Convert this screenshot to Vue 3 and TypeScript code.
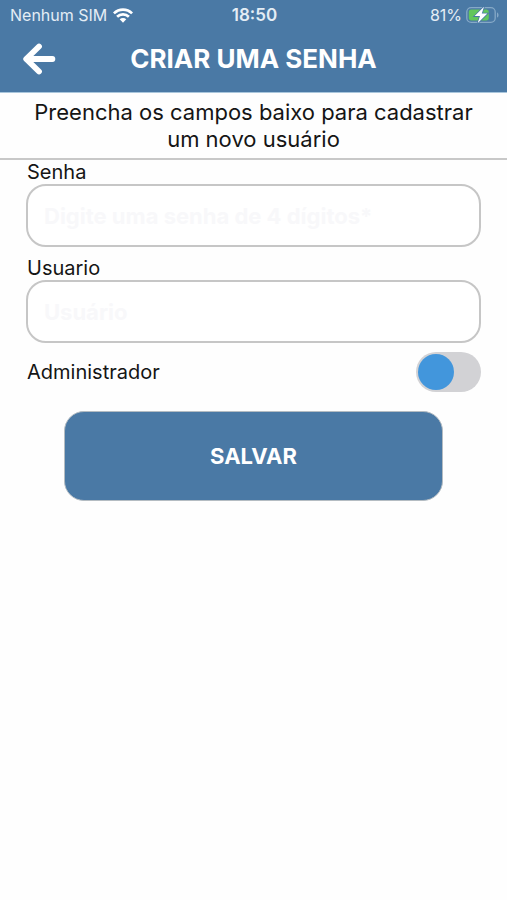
<script setup lang="ts">
import { ref } from 'vue'

const password = ref('')
const user = ref('')
const isAdmin = ref(false)
</script>

<template>
  <div class="screen">
    <header class="top">
      <div class="status">
        <div class="carrier">
          <span>Nenhum SIM</span>
          <svg class="wifi" viewBox="0 0 20 15" aria-hidden="true">
            <g fill="none" stroke="#fff" stroke-width="2.7">
              <path d="M0.9 5.4C6 .3 14 .3 19.1 5.4" />
              <path d="M4.1 8.8C7.4 5.6 12.6 5.6 15.9 8.8" />
            </g>
            <path d="M6.7 11.3C8.6 9.5 11.4 9.5 13.3 11.3L10 14.7Z" fill="#fff" />
          </svg>
        </div>
        <time class="clock">18:50</time>
        <div class="power">
          <span>81%</span>
          <svg class="battery" viewBox="0 0 33 18" aria-hidden="true">
            <rect x="0.8" y="1.6" width="28.4" height="14.8" rx="4.4" fill="none" stroke="#86a9c7" stroke-width="1.3" />
            <path d="M31 6.4C33 7 33 11 31 11.6Z" fill="#86a9c7" />
            <rect x="2.8" y="3.6" width="20" height="10.8" rx="2.6" fill="#62c65c" />
            <path d="M18 0.8L8.6 10.1H14L11.6 17.2L21.4 7.6H15.8Z" fill="#fff" stroke="#4a79a5" stroke-width="1.6" paint-order="stroke" />
          </svg>
        </div>
      </div>
      <div class="bar">
        <button class="back" type="button" aria-label="Voltar">
          <svg viewBox="0 0 34 32" aria-hidden="true">
            <path d="M17 3.5L4.2 16L17 28.5" fill="none" stroke="#fff" stroke-width="5.8" stroke-linecap="round" stroke-linejoin="round" />
            <path d="M5 16H30.4" fill="none" stroke="#fff" stroke-width="5.8" stroke-linecap="round" />
          </svg>
        </button>
        <h1>CRIAR UMA SENHA</h1>
      </div>
    </header>

    <p class="intro">Preencha os campos baixo para cadastrar um novo usuário</p>

    <form class="form" @submit.prevent>
      <div class="field">
        <label for="password">Senha</label>
        <input id="password" v-model="password" type="password" maxlength="4" placeholder="Digite uma senha de 4 dígitos*" />
      </div>
      <div class="field">
        <label for="user">Usuario</label>
        <input id="user" v-model="user" type="text" placeholder="Usuário" />
      </div>
      <div class="option">
        <label for="admin">Administrador</label>
        <input id="admin" v-model="isAdmin" class="switch" type="checkbox" role="switch" />
      </div>
      <button class="save" type="submit">SALVAR</button>
    </form>
  </div>
</template>

<style>
body {
  margin: 0;
  background: #fefefe;
}
</style>

<style scoped>
.screen {
  font-family: Inter, "Liberation Sans", sans-serif;
  color: #151515;
}

.top {
  background: #4a79a5;
  color: #fff;
  border-bottom: 1px solid #a9c6dc;
}

.status {
  display: grid;
  grid-template-columns: 1fr auto 1fr;
  align-items: center;
  height: 30px;
  padding: 0 8px 0 10px;
  font-size: 16px;
  color: #e4edf5;
}

.carrier,
.power {
  display: flex;
  align-items: center;
  gap: 6px;
}

.power {
  justify-content: flex-end;
  gap: 4px;
}

.clock {
  font-size: 17px;
  font-weight: 600;
}

.wifi {
  width: 20px;
  height: 15px;
}

.battery {
  width: 33px;
  height: 18px;
}

.bar {
  display: grid;
  grid-template-columns: 34px 1fr 34px;
  align-items: center;
  height: 62px;
  padding: 0 22px 4px;
  box-sizing: border-box;
}

.back {
  display: block;
  padding: 0;
  border: 0;
  background: none;
}

.back svg {
  display: block;
  width: 34px;
  height: 32px;
}

h1 {
  margin: 0;
  text-align: center;
  font-size: 26px;
  line-height: 32px;
  font-weight: 700;
}

.intro {
  margin: 0;
  padding: 6px 32px 5px;
  border-bottom: 2px solid #c8c8c8;
  text-align: center;
  font-size: 22px;
  line-height: 27px;
}

.form {
  padding: 0 26px;
}

label {
  display: block;
  padding-left: 1px;
  font-size: 20px;
  line-height: 24px;
}

.field {
  margin-bottom: 9px;
}

.field input {
  display: block;
  width: 100%;
  height: 63px;
  box-sizing: border-box;
  padding: 0 16px;
  border: 2px solid #c6c6c6;
  border-radius: 20px;
  background: #fff;
  font: inherit;
  font-size: 22px;
  font-weight: 700;
  color: #151515;
}

.field input::placeholder {
  color: #f8f8fa;
  opacity: 1;
}

.option {
  display: flex;
  align-items: center;
  justify-content: space-between;
  height: 40px;
}

.switch {
  appearance: none;
  display: flex;
  align-items: center;
  width: 65px;
  height: 40px;
  margin: 0;
  padding: 2px;
  box-sizing: border-box;
  border-radius: 20px;
  background: #d2d2d5;
}

.switch::before {
  content: "";
  width: 36px;
  height: 36px;
  border-radius: 50%;
  background: #4296dc;
}

.switch:checked {
  justify-content: flex-end;
}

.save {
  display: block;
  width: calc(100% - 76px);
  height: 90px;
  margin: 19px auto 0;
  border: 1px solid #b4bcc2;
  border-radius: 20px;
  background: #4a79a5;
  color: #fff;
  font: inherit;
  font-size: 22px;
  font-weight: 700;
}
</style>
